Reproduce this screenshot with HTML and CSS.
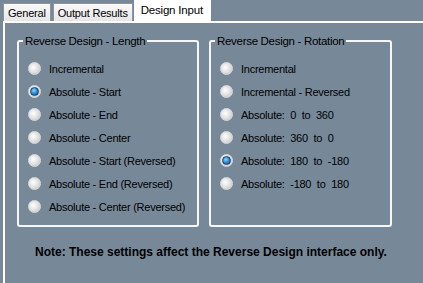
FILE: index.html
```html
<!DOCTYPE html>
<html lang="en">
<head>
    <meta charset="UTF-8">
    <meta name="viewport" content="width=device-width, initial-scale=1.0">
    <title>Design Input</title>
    <link rel="stylesheet" href="styles.css">
</head>
<body>
  <div class="tabs">
    <div class="tab">General</div>
    <div class="tab">Output Results</div>
    <div class="tab active">Design Input</div>
  </div>
  <div class="panel">
    <div class="groups">
      <fieldset class="group">
        <legend>Reverse Design - Length</legend>
        <div class="option"><span class="radio"></span>Incremental</div>
        <div class="option"><span class="radio checked"></span>Absolute - Start</div>
        <div class="option"><span class="radio"></span>Absolute - End</div>
        <div class="option"><span class="radio"></span>Absolute - Center</div>
        <div class="option"><span class="radio"></span>Absolute - Start (Reversed)</div>
        <div class="option"><span class="radio"></span>Absolute - End (Reversed)</div>
        <div class="option"><span class="radio"></span>Absolute - Center (Reversed)</div>
      </fieldset>
      <fieldset class="group">
        <legend>Reverse Design - Rotation</legend>
        <div class="option"><span class="radio"></span>Incremental</div>
        <div class="option"><span class="radio"></span>Incremental - Reversed</div>
        <div class="option"><span class="radio"></span>Absolute:&nbsp; 0&nbsp; to&nbsp; 360</div>
        <div class="option"><span class="radio"></span>Absolute:&nbsp; 360&nbsp; to&nbsp; 0</div>
        <div class="option"><span class="radio checked"></span>Absolute:&nbsp; 180&nbsp; to&nbsp; -180</div>
        <div class="option"><span class="radio"></span>Absolute:&nbsp; -180&nbsp; to&nbsp; 180</div>
      </fieldset>
    </div>
    <p class="note">Note: These settings affect the Reverse Design interface only.</p>
  </div>
</body>
</html>
```

FILE: styles.css
```css
* {
  box-sizing: border-box;
}
body {
  margin: 0;
  background-color: #778899;
  font-family: "Liberation Sans", Arial, sans-serif;
  font-size: 11px;
  color: #000;
  overflow: hidden;
}
.tabs {
  display: flex;
  align-items: flex-end;
  height: 21px;
  padding-left: 3px;
}
.tab {
  height: 18px;
  padding: 2px 4px 0 4px;
  margin-right: 2px;
  border: 1px solid #8c949c;
  border-bottom: none;
  background: linear-gradient(#fafafa, #e6e6e6);
  line-height: 15px;
  white-space: nowrap;
  letter-spacing: -0.2px;
}
.tab.active {
  height: 22px;
  margin-bottom: -1px;
  margin-left: -1px;
  padding: 2px 7px 0 6px;
  background: #fff;
  border-color: #fff;
  font-size: 11.5px;
}
.panel {
  margin-left: 3px;
  border-top: 2px solid #fff;
  border-left: 2px solid #fff;
  height: 262px;
  padding: 11px 0 0 12px;
}
.groups {
  display: flex;
  gap: 10px;
}
.group {
  margin: 0;
  width: 182px;
  height: 193px;
  padding: 0 0 0 4px;
  border: 2px solid #f6f6f6;
  border-radius: 3px;
}
.group + .group {
  width: 183px;
}
legend {
  padding: 0 2px;
  font-size: 11.5px;
  line-height: 14px;
  letter-spacing: -0.3px;
}
.option {
  display: flex;
  align-items: center;
  height: 23px;
  padding-left: 5px;
  font-size: 11px;
  letter-spacing: -0.25px;
  white-space: nowrap;
}
.option:first-of-type {
  margin-top: 9px;
}
.radio {
  flex: none;
  width: 13px;
  height: 13px;
  border-radius: 50%;
  margin-right: 8px;
  border: 1px solid #dcdcdc;
  background: radial-gradient(circle at 40% 40%, #ffffff, #dedede 55%, #b8b8b8);
  display: flex;
  align-items: center;
  justify-content: center;
}
.radio.checked::after {
  content: "";
  width: 7px;
  height: 7px;
  border-radius: 50%;
  border: 1px solid #1c3f63;
  background: radial-gradient(circle at 40% 35%, #8fd2ff, #2a8ad6 50%, #0c4f8c);
}
.note {
  margin: 18px 0 0 18px;
  font-weight: bold;
  font-size: 12px;
}
```
